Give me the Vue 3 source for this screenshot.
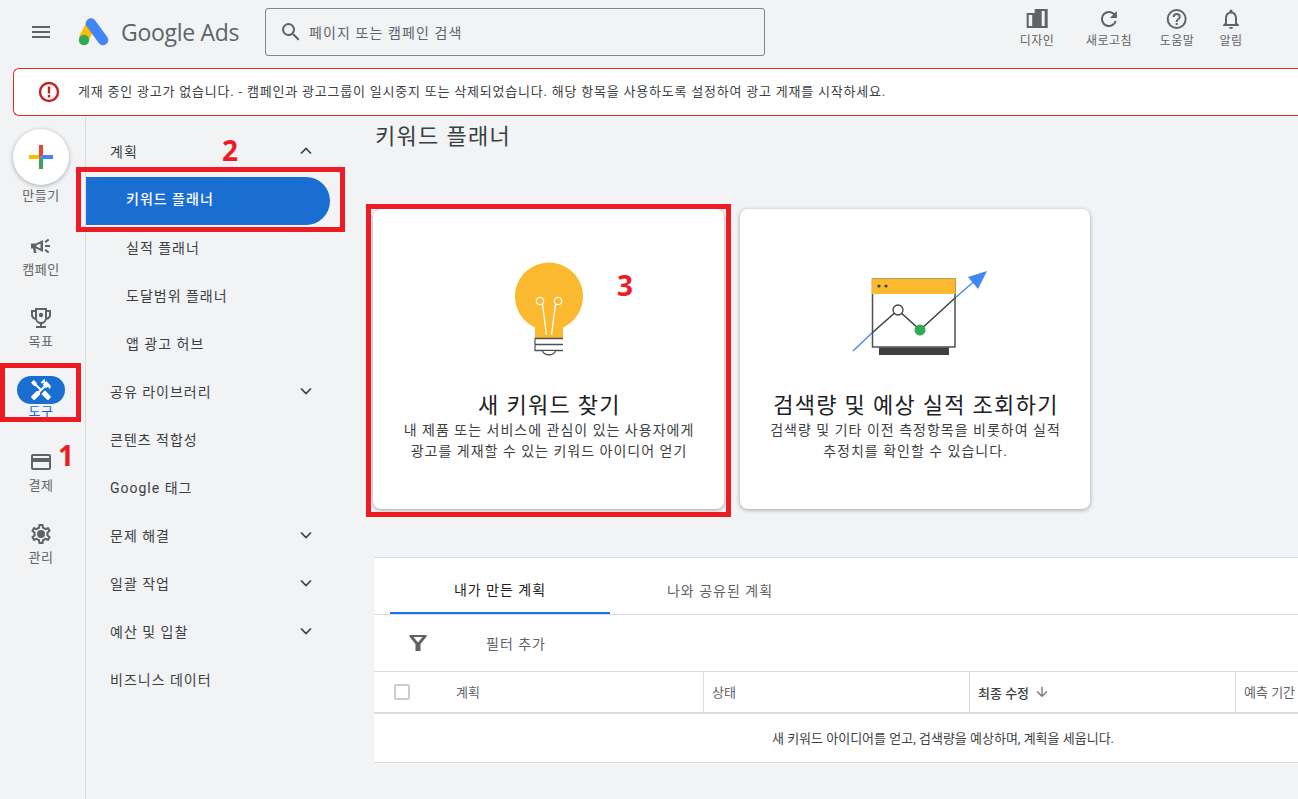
<template>
  <div class="page">
    <header class="topbar">
      <div class="menu-btn">
        <svg width="24" height="24" viewBox="0 0 24 24"><path d="M3 18h18v-2H3zm0-5h18v-2H3zm0-7v2h18V6z" fill="#5f6368" /></svg>
      </div>
      <svg class="logo" width="31" height="28" viewBox="0 0 31 28">
        <path d="M9 3 1 19l9 4 8-14z" fill="#fbbc04" />
        <path d="M13 5.500 25 22" stroke="#4285f4" stroke-width="10.500" stroke-linecap="round" fill="none" />
        <circle cx="6" cy="22" r="5.200" fill="#34a853" />
      </svg>
      <span class="logo-text">Google Ads</span>
      <div class="search">
        <svg width="24" height="24" viewBox="0 0 24 24"><path d="M15.500 14h-.79l-.28-.27A6.470 6.470 0 0 0 16 9.500 6.500 6.500 0 1 0 9.500 16c1.610 0 3.090-.59 4.230-1.570l.27.28v.79l5 4.990L20.490 19zm-6 0C7.010 14 5 11.990 5 9.500S7.010 5 9.500 5 14 7.010 14 9.500 11.990 14 9.500 14" fill="#5f6368" /></svg>
        <span>페이지 또는 캠페인 검색</span>
      </div>
      <div class="top-actions">
        <div class="top-action design">
          <svg width="24" height="24" viewBox="0 0 24 24"><path fill-rule="evenodd" d="M10 2h13v19H2V6h8zM4 8v11h3.500V8zm13-4v15h3V4z" fill="#5f6368" /></svg>
          <span>디자인</span>
        </div>
        <div class="top-action refresh">
          <svg width="24" height="24" viewBox="0 0 24 24"><path d="M17.650 6.350A7.960 7.960 0 0 0 12 4a8 8 0 1 0 7.730 10h-2.080A6 6 0 1 1 12 6c1.660 0 3.140.69 4.220 1.780L13 11h7V4z" fill="#5f6368" /></svg>
          <span>새로고침</span>
        </div>
        <div class="top-action help">
          <svg width="24" height="24" viewBox="0 0 24 24"><path d="M11 18h2v-2h-2zm1-16a10 10 0 1 0 0 20 10 10 0 0 0 0-20m0 18a8 8 0 1 1 0-16 8 8 0 0 1 0 16m0-14a4 4 0 0 0-4 4h2a2 2 0 1 1 4 0c0 2-3 1.750-3 5h2c0-2.250 3-2.500 3-5a4 4 0 0 0-4-4" fill="#5f6368" /></svg>
          <span>도움말</span>
        </div>
        <div class="top-action bell">
          <svg width="24" height="24" viewBox="0 0 24 24"><path d="M12 22c1.100 0 2-.9 2-2h-4c0 1.100.9 2 2 2m6-6v-5c0-3.070-1.630-5.640-4.500-6.320V4a1.500 1.500 0 0 0-3 0v.68C7.640 5.360 6 7.920 6 11v5l-2 2v1h16v-1zm-2 1H8v-6c0-2.480 1.510-4.500 4-4.500s4 2.020 4 4.500z" fill="#5f6368" /></svg>
          <span>알림</span>
        </div>
      </div>
    </header>

    <div class="alert">
      <svg class="alert-icon" width="24" height="24" viewBox="0 0 24 24">
        <circle cx="12" cy="12" r="9" fill="none" stroke="#c5221f" stroke-width="2.400" />
        <path d="M10.800 6.500h2.400v7h-2.400zM10.800 15h2.400v2.400h-2.400z" fill="#c5221f" />
      </svg>
      <span class="alert-text">게재 중인 광고가 없습니다. - 캠페인과 광고그룹이 일시중지 또는 삭제되었습니다. 해당 항목을 사용하도록 설정하여 광고 게재를 시작하세요.</span>
    </div>

    <div class="body">
      <aside class="rail">
        <div class="create">
          <div class="create-btn">
            <svg width="24" height="24" viewBox="0 0 24 24">
              <path d="M10 0h4v10h-4z" fill="#ea4335" />
              <path d="M14 10h10v4H14z" fill="#4285f4" />
              <path d="M10 14h4v10h-4z" fill="#34a853" />
              <path d="M0 10h10v4H0z" fill="#fbbc04" />
              <path d="M10 10h4l-4 4z" fill="#ea4335" />
              <path d="M14 10v4h-4z" fill="#4285f4" />
            </svg>
          </div>
          <span>만들기</span>
        </div>
        <div class="rail-item">
          <svg width="24" height="24" viewBox="0 0 24 24"><path d="M2 9.500h5L14 6v12l-7-3.500H6.500l1 4.500H5l-1-4.500H2z" fill="#5f6368" /><path d="M11.500 9.500v5l-3.800-1.700h-.2v-1.600z" fill="#f1f3f4" /><path d="M16 11h5v2h-5zM15.500 7.300l3.600-2.600 1.200 1.600-3.600 2.600zM15.500 16.700l1.200-1.600 3.600 2.600-1.200 1.600z" fill="#5f6368" /></svg>
          <span>캠페인</span>
        </div>
        <div class="rail-item">
          <svg width="24" height="24" viewBox="0 0 24 24"><path d="M6 2h12v2h4v5c0 2.500-1.800 4.300-4.300 4.700A6 6 0 0 1 13 17.900V20h4v2H7v-2h4v-2.100a6 6 0 0 1-4.700-4.200C3.800 13.300 2 11.500 2 9V4h4zm2 2v8a4 4 0 1 0 8 0V4zM4 6v3c0 1.200.8 2.200 2 2.600V6zm14 0v5.600c1.200-.4 2-1.400 2-2.600V6z" fill="#5f6368" /><circle cx="12" cy="9" r="2.200" fill="#5f6368" /></svg>
          <span>목표</span>
        </div>
        <div class="rail-item active">
          <div class="tool-pill">
            <svg width="24" height="24" viewBox="0 0 24 24"><path d="m21.670 18.170-5.300-5.300h-.99l-2.540 2.540v.99l5.300 5.300c.39.39 1.020.39 1.410 0l2.120-2.120c.39-.38.39-1.020 0-1.410" fill="#fff" /><path d="m17.340 10.190 1.410-1.410 2.120 2.120c1.170-1.170 1.170-3.070 0-4.240l-3.540-3.540-1.410 1.410V1.710l-.7-.71-3.540 3.540.71.710h2.830l-1.410 1.410 1.060 1.060-2.890 2.890-4.130-4.130V5.060L4.830 2.040 2 4.870 5.030 7.900h1.410l4.130 4.130-.85.850H7.600l-5.300 5.300c-.39.39-.39 1.020 0 1.410l2.120 2.120c.39.39 1.020.39 1.410 0l5.300-5.300v-2.120l5.150-5.150 1.060 1.050z" fill="#fff" /></svg>
          </div>
          <span>도구</span>
        </div>
        <div class="rail-item">
          <svg width="24" height="24" viewBox="0 0 24 24"><path d="M20 4H4c-1.100 0-2 .9-2 2v12c0 1.100.9 2 2 2h16c1.100 0 2-.9 2-2V6c0-1.100-.9-2-2-2m0 14H4v-6h16zm0-10H4V6h16z" fill="#5f6368" /></svg>
          <span>결제</span>
        </div>
        <div class="rail-item">
          <svg width="24" height="24" viewBox="0 0 24 24"><path d="M19.430 12.980c.04-.32.07-.64.07-.98s-.03-.66-.07-.98l2.110-1.650c.19-.15.24-.42.12-.64l-2-3.460a.5.500 0 0 0-.61-.22l-2.490 1c-.52-.4-1.080-.73-1.690-.98l-.38-2.650A.49.490 0 0 0 14 2h-4c-.25 0-.46.18-.49.42l-.38 2.650c-.61.25-1.170.59-1.690.98l-2.490-1a.5.500 0 0 0-.61.22l-2 3.460c-.13.22-.07.49.12.64l2.110 1.650c-.04.32-.07.65-.07.98s.03.66.07.98l-2.110 1.650c-.19.15-.24.42-.12.64l2 3.460c.12.22.39.3.61.22l2.490-1c.52.4 1.080.73 1.690.98l.38 2.650c.03.24.24.42.49.42h4c.25 0 .46-.18.49-.42l.38-2.650c.61-.25 1.170-.59 1.690-.98l2.490 1c.23.09.49 0 .61-.22l2-3.460c.12-.22.07-.49-.12-.64zm-1.980-1.710c.04.31.05.52.05.73s-.02.43-.05.73l-.14 1.130.89.7 1.080.84-.7 1.210-1.270-.51-1.040-.42-.9.68c-.43.32-.84.56-1.250.73l-1.060.43-.16 1.130-.2 1.350h-1.400l-.19-1.350-.16-1.130-1.060-.43c-.43-.18-.83-.41-1.230-.71l-.91-.7-1.060.43-1.270.51-.7-1.210 1.080-.84.89-.7-.14-1.130c-.03-.31-.05-.54-.05-.74s.02-.43.05-.73l.14-1.130-.89-.7-1.080-.84.7-1.210 1.270.51 1.040.42.9-.68c.43-.32.84-.56 1.250-.73l1.060-.43.16-1.130.2-1.350h1.390l.19 1.350.16 1.130 1.060.43c.43.18.83.41 1.230.71l.91.7 1.060-.43 1.270-.51.7 1.210-1.070.85-.89.7zM12 8a4 4 0 1 0 0 8 4 4 0 0 0 0-8" fill="#5f6368" /></svg>
          <span>관리</span>
        </div>
      </aside>

      <nav class="side-nav">
        <div v-for="item in navItems" :key="item.label" class="nav-row" :class="{ sub: item.sub, selected: item.selected }">
          <span>{{ item.label }}</span>
          <svg v-if="item.arrow" width="24" height="24" viewBox="0 0 24 24">
            <path :d="item.arrow === 'up' ? 'M7 14.500l5-5 5 5' : 'M7 9.500l5 5 5-5'" fill="none" stroke="#3c4043" stroke-width="1.700" />
          </svg>
        </div>
      </nav>

      <main class="content">
        <h1 class="title">키워드 플래너</h1>
        <div class="cards">
          <div class="card">
            <svg class="card-art" width="160" height="120" viewBox="0 0 160 120">
              <path d="M66 89V77.500a34 34 0 1 1 28 0V89z" fill="#fbb92f" />
              <path d="M73.500 54l4 31M86.500 54l-4 31" stroke="#fff" stroke-width="1.300" fill="none" />
              <circle cx="71" cy="51" r="3.700" stroke="#fff" stroke-width="1.300" fill="none" />
              <circle cx="89" cy="51" r="3.700" stroke="#fff" stroke-width="1.300" fill="none" />
              <path d="M66 88h28v13H66z" fill="#fff" />
              <path d="M66 88.500h28M66 94.500h28M66 100.500h28" stroke="#4d5156" stroke-width="1.700" fill="none" />
              <path d="M66 88v13" stroke="#4d5156" stroke-width="1.200" fill="none" />
              <path d="M73.500 101c2 5 11 5 13 0" stroke="#4d5156" stroke-width="1.300" fill="#fff" />
            </svg>
            <div class="card-title">새 키워드 찾기</div>
            <p class="card-desc">내 제품 또는 서비스에 관심이 있는 사용자에게<br />광고를 게재할 수 있는 키워드 아이디어 얻기</p>
          </div>
          <div class="card">
            <svg class="card-art" width="160" height="100" viewBox="0 0 160 100">
              <path d="M18 91 37 73M120 38l23-20" stroke="#4285f4" stroke-width="1.300" fill="none" />
              <path d="M152 11 133 17l10 12z" fill="#4285f4" />
              <path d="M37.500 19h82.500v68H37.500z" fill="#fff" stroke="#4d5156" stroke-width="1.500" />
              <path d="M37 18.500h83.500V34H37z" fill="#fbb92f" />
              <circle cx="44" cy="26" r="1.600" fill="#3c4043" />
              <circle cx="51" cy="26" r="1.600" fill="#3c4043" />
              <path d="M44 87.500h70V95H44z" fill="#3c4043" />
              <path d="M37 73 63 50 85 70 120 38" stroke="#3c4043" stroke-width="1.500" fill="none" />
              <circle cx="63" cy="50" r="5" fill="#fff" stroke="#3c4043" stroke-width="1.300" />
              <circle cx="85" cy="70" r="5.500" fill="#34a853" />
            </svg>
            <div class="card-title">검색량 및 예상 실적 조회하기</div>
            <p class="card-desc">검색량 및 기타 이전 측정항목을 비롯하여 실적<br />추정치를 확인할 수 있습니다.</p>
          </div>
        </div>

        <section class="plans">
          <div class="tabs">
            <div class="tab current">내가 만든 계획</div>
            <div class="tab">나와 공유된 계획</div>
          </div>
          <div class="filter-row">
            <svg width="24" height="24" viewBox="0 0 24 24"><path d="M3.500 4h17v1.800L14.500 13v7h-5v-7l-6-7.200zm4 2 4.500 5.600L16.500 6z" fill="#5f6368" /></svg>
            <span>필터 추가</span>
          </div>
          <div class="table-head">
            <div class="th plan"><span class="check"></span><span>계획</span></div>
            <div class="th status">상태</div>
            <div class="th modified"><b>최종 수정</b>
              <svg width="16" height="16" viewBox="0 0 24 24"><path d="m20 12-1.410-1.410L13 16.170V4h-2v12.170l-5.580-5.590L4 12l8 8z" fill="#757575" /></svg>
            </div>
            <div class="th period">예측 기간</div>
          </div>
          <div class="empty-row">새 키워드 아이디어를 얻고, 검색량을 예상하며, 계획을 세웁니다.</div>
        </section>
      </main>
    </div>

    <!-- annotations drawn on top of the screenshot -->
    <div class="mark mark-tools"></div>
    <div class="mark mark-planner"></div>
    <div class="mark mark-card"></div>
    <span class="mark-num num1">1</span>
    <span class="mark-num num2">2</span>
    <span class="mark-num num3">3</span>
  </div>
</template>

<script setup>
const navItems = [
  { label: '계획', arrow: 'up' },
  { label: '키워드 플래너', sub: true, selected: true },
  { label: '실적 플래너', sub: true },
  { label: '도달범위 플래너', sub: true },
  { label: '앱 광고 허브', sub: true },
  { label: '공유 라이브러리', arrow: 'down' },
  { label: '콘텐츠 적합성' },
  { label: 'Google 태그' },
  { label: '문제 해결', arrow: 'down' },
  { label: '일괄 작업', arrow: 'down' },
  { label: '예산 및 입찰', arrow: 'down' },
  { label: '비즈니스 데이터' }
]
</script>

<style>
html, body {
  margin: 0;
  background: #f1f3f4;
  overflow: hidden;
}
</style>

<style scoped>
.page {
  position: relative;
  width: 1298px;
  height: 799px;
  overflow: hidden;
  background: #f1f3f4;
  font-family: "Roboto", "Noto Sans CJK KR", sans-serif;
  color: #3c4043;
  display: flex;
  flex-direction: column;
}
.topbar {
  height: 68px;
  flex: none;
  display: flex;
  align-items: flex-start;
}
.menu-btn {
  margin: 20px 0 0 29px;
  height: 24px;
}
.logo {
  margin: 18px 0 0 25px;
}
.logo-text {
  margin: 16px 0 0 12px;
  font-family: "Open Sans", sans-serif;
  font-size: 23px;
  line-height: 32px;
  color: #5f6368;
  letter-spacing: -0.3px;
  width: 134px;
}
.search {
  margin: 8px 0 0 10px;
  width: 498px;
  height: 46px;
  border: 1px solid #80868b;
  border-radius: 3px;
  display: flex;
  align-items: center;
  gap: 6px;
  font-size: 14px;
  letter-spacing: 1.1px;
  color: #5f6368;
}
.search svg {
  margin-left: 13px;
}
.top-actions {
  position: relative;
  flex: 1;
  height: 68px;
}
.top-action {
  position: absolute;
  top: 7px;
  display: flex;
  flex-direction: column;
  align-items: center;
  font-size: 12px;
  line-height: 16px;
  letter-spacing: 0.5px;
  color: #5f6368;
  transform: translateX(-50%);
  white-space: nowrap;
  gap: 2px;
}
.design { left: 272px; }
.refresh { left: 344px; }
.help { left: 412px; }
.bell { left: 466px; }

.alert {
  margin-left: 13px;
  height: 48px;
  flex: none;
  box-sizing: border-box;
  border: 1px solid #d93025;
  border-right: none;
  border-radius: 6px 0 0 6px;
  background: #fff;
  display: flex;
  align-items: center;
  font-size: 13px;
  letter-spacing: 0.79px;
  color: #3c4043;
  padding-left: 23px;
  gap: 17px;
}
.alert-text {
  padding-bottom: 3px;
}
.body {
  flex: 1;
  display: flex;
  min-height: 0;
}
.rail {
  width: 82px;
  padding-right: 3px;
  flex: none;
  border-right: 1px solid #dadce0;
  display: flex;
  flex-direction: column;
  align-items: center;
}
.create {
  display: flex;
  flex-direction: column;
  align-items: center;
  margin: 13px 0 18px;
  font-size: 13px;
  line-height: 16px;
  letter-spacing: 0.5px;
  color: #5f6368;
}
.create-btn {
  width: 56px;
  height: 56px;
  border-radius: 50%;
  background: #fff;
  box-shadow: 0 1px 4px rgba(60, 64, 67, 0.4);
  display: flex;
  align-items: center;
  justify-content: center;
  margin-bottom: 3px;
}
.rail-item {
  height: 72px;
  box-sizing: border-box;
  padding-top: 12px;
  display: flex;
  flex-direction: column;
  align-items: center;
  font-size: 13px;
  line-height: 16px;
  letter-spacing: 0.5px;
  color: #5f6368;
  gap: 4px;
}
.rail-item.active {
  color: #1967d2;
  gap: 0;
  padding-top: 10px;
}
.tool-pill {
  width: 48px;
  height: 28px;
  border-radius: 14px;
  background: #1a6ed2;
  display: flex;
  align-items: center;
  justify-content: center;
}
.side-nav {
  width: 288px;
  flex: none;
  box-sizing: border-box;
  padding-top: 11px;
}
.nav-row {
  height: 48px;
  width: 208px;
  padding: 0 24px;
  display: flex;
  align-items: center;
  justify-content: space-between;
  font-size: 14px;
  letter-spacing: 1px;
  color: #3c4043;
}
.nav-row.sub {
  padding-left: 40px;
  width: 192px;
}
.nav-row.selected {
  margin: 2px 0 -2px;
  height: 42px;
  padding-bottom: 6px;
  width: 180px;
  background: #1a6ed2;
  color: #fff;
  border-radius: 0 24px 24px 0;
  font-weight: 500;
}
.content {
  flex: 1;
  min-width: 0;
}
.title {
  margin: 6px 0 0 1px;
  font-size: 22px;
  line-height: 30px;
  font-weight: 400;
  letter-spacing: 1.3px;
  color: #3c4043;
}
.cards {
  display: flex;
  gap: 16px;
  margin: 57px 0 0 -1px;
}
.card {
  width: 351px;
  height: 300px;
  background: #fff;
  border-radius: 8px;
  box-shadow: 0 1px 4px rgba(60, 64, 67, 0.45);
  display: flex;
  flex-direction: column;
  align-items: center;
  box-sizing: border-box;
}
.card:nth-child(2) {
  width: 350px;
}
.card-art {
  margin-top: 41px;
  flex: none;
}
.card:nth-child(2) .card-art {
  margin-top: 51px;
  margin-bottom: 10px;
}
.card-title {
  margin-top: 21px;
  padding-left: 2px;
  font-size: 22px;
  line-height: 30px;
  letter-spacing: 1.3px;
  color: #202124;
}
.card-desc {
  margin: -1px 0 0;
  padding-left: 1px;
  font-size: 14px;
  line-height: 21px;
  letter-spacing: 1px;
  text-align: center;
  color: #3c4043;
  white-space: nowrap;
}
.plans {
  margin-top: 48px;
  background: #fff;
  border-top: 1px solid #dadce0;
  border-bottom: 1px solid #dadce0;
  height: 206px;
  box-sizing: border-box;
}
.tabs {
  display: flex;
  height: 56px;
  border-bottom: 1px solid #dadce0;
  padding-left: 16px;
}
.tab {
  width: 220px;
  height: 56px;
  box-sizing: border-box;
  padding-top: 7px;
  display: flex;
  align-items: center;
  justify-content: center;
  font-size: 14px;
  letter-spacing: 1px;
  color: #5f6368;
}
.tab.current {
  color: #202124;
  border-bottom: 2px solid #1a73e8;
}
.filter-row {
  height: 56px;
  border-bottom: 1px solid #dadce0;
  display: flex;
  align-items: center;
  padding-left: 32px;
  gap: 56px;
  font-size: 14px;
  letter-spacing: 1px;
  color: #5f6368;
}
.table-head {
  height: 40px;
  border-bottom: 2px solid #dadce0;
  display: flex;
  font-size: 13px;
  color: #5f6368;
}
.th {
  display: flex;
  align-items: center;
  box-sizing: border-box;
  padding-left: 8px;
  border-right: 1px solid #dadce0;
}
.th.plan {
  width: 330px;
  padding-left: 20px;
  gap: 46px;
}
.th.status { width: 266px; }
.th.modified {
  width: 266px;
  gap: 5px;
  color: #3c4043;
}
.th.modified b { font-weight: 500; }
.th.period {
  flex: 1;
  border-right: none;
  white-space: nowrap;
}
.th span:last-child,
.th.status,
.th.period {
  padding-bottom: 1px;
}
.check {
  width: 12px;
  height: 12px;
  border: 2px solid #cccccc;
  border-radius: 2px;
}
.empty-row {
  height: 46px;
  display: flex;
  align-items: center;
  justify-content: center;
  font-size: 13px;
  color: #3c4043;
  padding-left: 214px;
}

.mark {
  position: absolute;
  border: 5px solid #ed1c24;
  box-sizing: border-box;
  pointer-events: none;
}
.mark-tools { left: 0; top: 363px; width: 81px; height: 59px; }
.mark-planner { left: 76px; top: 167px; width: 269px; height: 65px; }
.mark-card { left: 366px; top: 204px; width: 365px; height: 313px; }
.mark-num {
  position: absolute;
  color: #ed1c24;
  font-family: "Open Sans", sans-serif;
  font-weight: 700;
  font-size: 28px;
  line-height: 32px;
}
.num1 { left: 58px; top: 439px; }
.num2 { left: 222px; top: 134px; }
.num3 { left: 617px; top: 269px; }
</style>
